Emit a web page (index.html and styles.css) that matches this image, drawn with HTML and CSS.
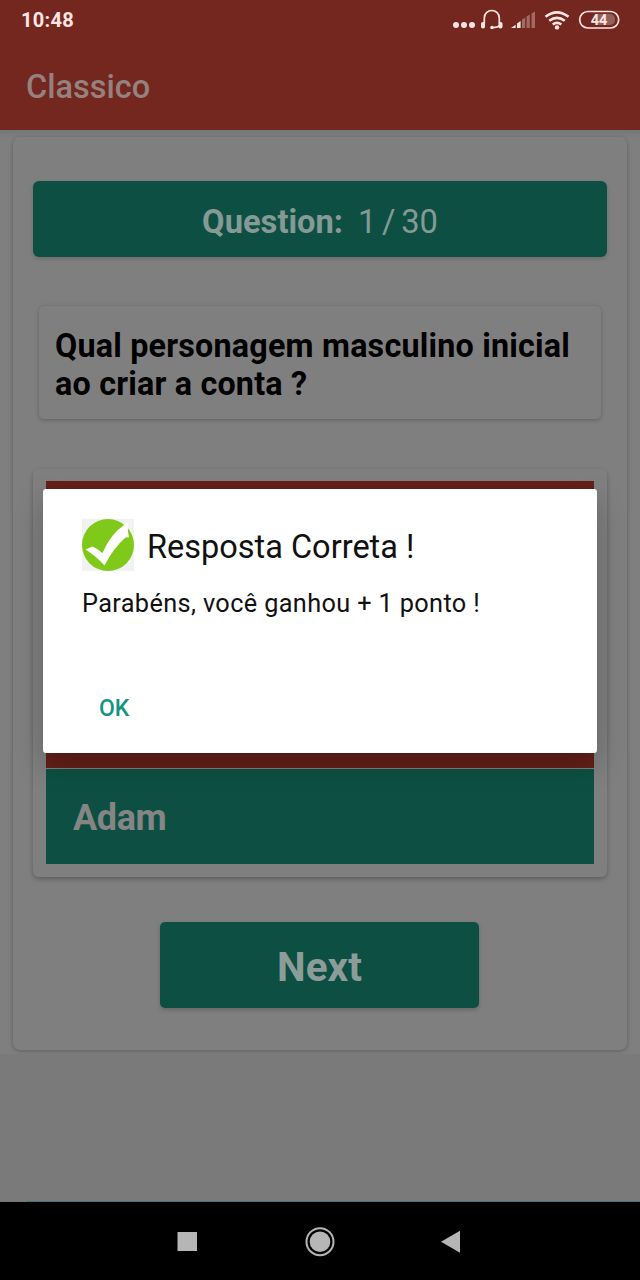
FILE: index.html
```html
<!DOCTYPE html>
<html lang="pt-BR">
<head>
<meta charset="utf-8">
<title>Classico</title>
<link rel="stylesheet" href="styles.css">
</head>
<body>
<div class="screen">
  <header class="header">
    <div class="status">
      <span class="clock">10:48</span>
      <svg class="status-icons" width="170" height="30" viewBox="0 0 170 30" fill="none">
        <g fill="#ffe5e1">
          <circle cx="6" cy="20" r="3"/><circle cx="14" cy="20" r="3"/><circle cx="22" cy="20" r="3"/>
          <rect x="31" y="17" width="4" height="6.500" rx="1.800"/><rect x="48.500" y="17" width="4" height="6.500" rx="1.800"/>
          <circle cx="42" cy="22.500" r="1.800"/>
          <path d="M61 22.900l4.700-3.200v3.200zM67 18.500l3.600-2.500v6.900H67z"/>
        </g>
        <path d="M34.300 18.500V13a7.500 7.500 0 0 1 15 0v5.500M49.300 20.500q-1 2-7 2" stroke="#ffe5e1" stroke-width="1.700"/>
        <path fill="#a36a64" d="M72 14.500l3.200-2v10.400H72zM76.600 11.500l3.200-2v13.400h-3.200zM81.500 8.500l3.500-2v16.400h-3.500z"/>
        <g stroke="#ffe5e1" stroke-width="2.700">
          <path d="M95.500 11.800q11.500-9 23 0"/><path d="M99.200 15.800q7.800-6 15.600 0"/><path d="M102.700 19.500q4.300-3.200 8.600 0"/>
        </g>
        <circle cx="107" cy="22.400" r="2.200" fill="#ffe5e1"/>
        <path fill="#93605b" d="M147 9h13a5 5 0 0 1 5 5v1a5 5 0 0 1-5 5h-13z"/>
        <rect x="129.700" y="6.500" width="39" height="16.500" rx="8.200" stroke="#ffe5e1" stroke-width="1.700"/>
        <text class="battery" x="149" y="20" text-anchor="middle">44</text>
      </svg>
    </div>
    <h1 class="title">Classico</h1>
  </header>

  <main class="content">
    <section class="quiz">
      <div class="counter"><b>Question:</b><span class="count">1 / 30</span></div>
      <p class="question">Qual personagem masculino inicial ao criar a conta ?</p>
      <div class="answers">
        <div class="wrong"></div>
        <div class="option">Adam</div>
      </div>
      <div class="next">Next</div>
    </section>
  </main>
  <div class="rest"></div>
  <div class="edge"></div>

  <nav class="nav">
    <svg width="640" height="77" viewBox="0 0 640 77">
      <path fill="#b6b6b6" d="M177.500 29h19.500v19h-19.500zM441 38.700l19-11v22z"/>
      <circle cx="320" cy="38.700" r="13.500" fill="none" stroke="#b6b6b6" stroke-width="2"/>
      <circle cx="320" cy="38.700" r="10.300" fill="#b6b6b6"/>
    </svg>
  </nav>

  <div class="dialog" role="dialog">
    <div class="dialog-head">
      <svg width="52" height="52" viewBox="0 0 52 52">
        <path fill="#f2f2f2" d="M0 0h52v52H0z"/>
        <circle cx="26" cy="26" r="26" fill="#7fca18"/>
        <path fill="#fff" d="M3.500 30.500L10.500 27.500Q16 30 20.500 34 29 14.500 41.500 6.500L44.500 3.500 46.500 4 45.800 11 47 18.500Q45.500 18 43.500 18.500 31.500 29 22.500 46.500 14 37 3.500 30.500z"/>
      </svg>
      <h2 class="dialog-title">Resposta Correta !</h2>
    </div>
    <p class="dialog-text">Parabéns, você ganhou + 1 ponto !</p>
    <div class="ok">OK</div>
  </div>
</div>
</body>
</html>
```
FILE: styles.css
```css
* { box-sizing: border-box; }
body, h1, h2, p { margin: 0; }
body { font-family: Roboto, sans-serif; }
.screen {
  position: relative;
  display: flex;
  flex-direction: column;
  width: 640px;
  height: 1280px;
  overflow: hidden;
  background: #7a7a7a;
}
.header { height: 130px; background: #73271f; }
.status {
  display: flex;
  justify-content: space-between;
  height: 40px;
  padding: 5px 20px 0 21px;
}
.clock { font-size: 20px; line-height: 31px; font-weight: 700; color: #ffe5e1; letter-spacing: 0.3px; }
.battery { font-size: 14.5px; font-weight: 700; fill: #ffe5e1; }
.title { padding: 27px 26px 0; font-size: 32.5px; line-height: 40px; font-weight: 500; color: #95817e; }
.content {
  height: 924px;
  padding: 7px 13px 4px;
  overflow: hidden;
  background: linear-gradient(#737779, #7f7f7f 8px);
}
.quiz {
  display: flex;
  flex-direction: column;
  height: 913px;
  padding: 44px 20px 0;
  border-radius: 7px;
  background: #7f7f7f;
  box-shadow: 0 1px 4px rgba(0,0,0,.28);
}
.counter {
  display: flex;
  justify-content: center;
  gap: 15px;
  height: 76px;
  border-radius: 6px;
  background: #0d5043;
  box-shadow: 0 2px 4px rgba(0,0,0,.15);
  color: #859995;
  font-size: 32.7px;
  line-height: 82px;
}
.count { word-spacing: -2.5px; }
.question {
  height: 113px;
  margin: 49px 6px 0;
  padding: 21px 16px 0;
  border-radius: 5px;
  box-shadow: 0 1px 4px rgba(0,0,0,.25);
  color: #000;
  font-size: 32.3px;
  line-height: 38px;
  font-weight: 700;
  letter-spacing: 0.2px;
}
.answers {
  height: 408px;
  margin-top: 50px;
  padding: 12px 13px 0;
  border-radius: 6px;
  box-shadow: 0 2px 5px rgba(0,0,0,.28);
}
.wrong { height: 287px; background: #641f18; }
.option {
  height: 95px;
  margin-top: 1px;
  padding-left: 27px;
  background: #0d5043;
  color: #858585;
  font-size: 36px;
  line-height: 98px;
  font-weight: 700;
  letter-spacing: -0.4px;
}
.next {
  width: 319px;
  height: 86px;
  margin: 45px 0 0 127px;
  border-radius: 5px;
  background: #0d5043;
  box-shadow: 0 2px 4px rgba(0,0,0,.2);
  color: #8b9c99;
  font-size: 40.5px;
  line-height: 91px;
  font-weight: 700;
  text-align: center;
}
.rest { flex: 1; }
.edge { height: 1px; background: linear-gradient(90deg, #747777 26px, #467474 27px); }
.nav { height: 78px; padding-top: 1px; background: #000; }
.nav svg { display: block; }
.dialog {
  position: absolute;
  left: 43px;
  top: 489px;
  width: 554px;
  height: 264px;
  padding: 30px 39px 0;
  border-radius: 3px;
  background: #fff;
  box-shadow: 0 12px 28px rgba(0,0,0,.22);
  color: #111;
}
.dialog-head { display: flex; gap: 13px; height: 52px; }
.dialog-title { font-size: 32.5px; line-height: 56px; font-weight: 400; white-space: nowrap; }
.dialog-text { margin-top: 17px; font-size: 25.3px; line-height: 31px; letter-spacing: 0.36px; white-space: nowrap; }
.ok { margin: 76px 0 0 17px; font-size: 23px; line-height: 28px; font-weight: 500; color: #159384; }
```
